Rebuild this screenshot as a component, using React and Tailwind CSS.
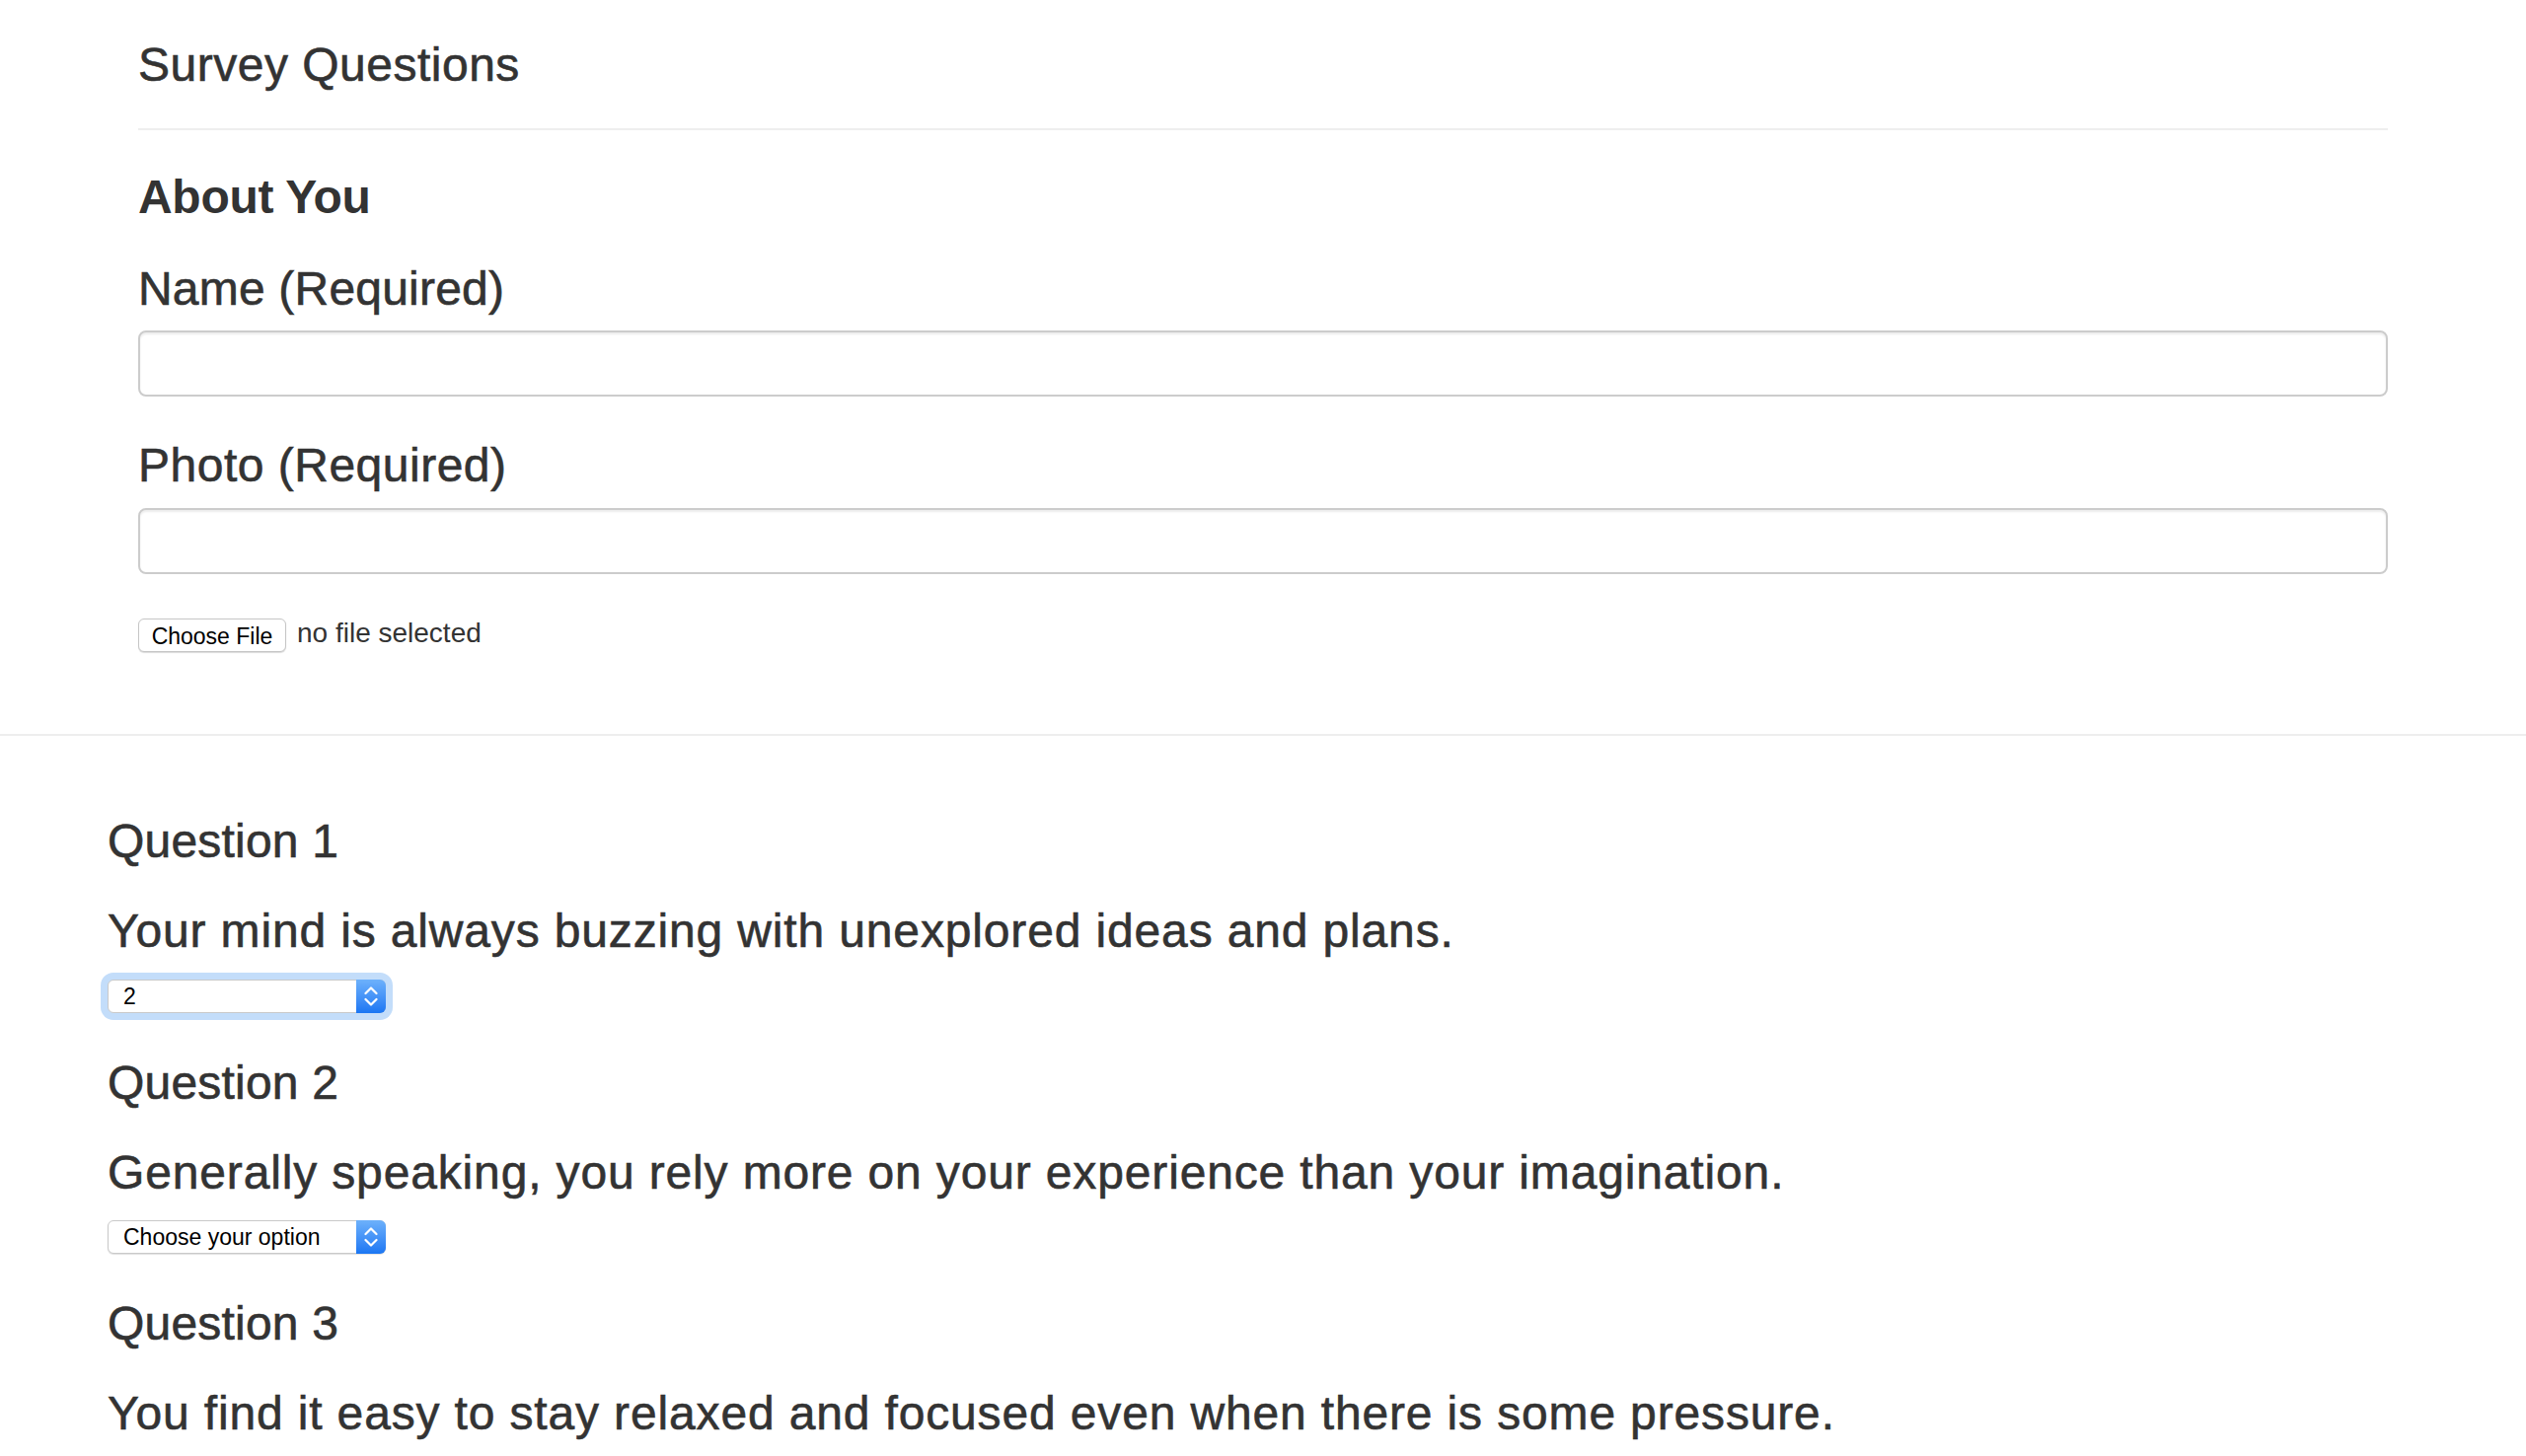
import { useState } from "react";

const questions = [
  {
    id: 1,
    text: "Your mind is always buzzing with unexplored ideas and plans.",
    value: "2",
    focused: true,
  },
  {
    id: 2,
    text: "Generally speaking, you rely more on your experience than your imagination.",
    value: "Choose your option",
  },
  {
    id: 3,
    text: "You find it easy to stay relaxed and focused even when there is some pressure.",
    value: "Choose your option",
  },
];

// headings in the shot are a medium weight, Liberation only has regular/bold
const medium = "text-[48px] font-medium leading-[52.8px] [-webkit-text-stroke:0.6px_#333]";

const Chevrons = () => (
  <svg width="14" height="24" viewBox="0 0 14 24" fill="none">
    <path d="M1.5 9 L7 3.5 L12.5 9" stroke="white" strokeWidth="2.2" strokeLinecap="round" strokeLinejoin="round" />
    <path d="M1.5 15 L7 20.5 L12.5 15" stroke="white" strokeWidth="2.2" strokeLinecap="round" strokeLinejoin="round" />
  </svg>
);

const FakeSelect = ({ value, focused }) => (
  <div
    className={`mt-[22px] flex h-[34px] w-[282px] items-stretch rounded-[6px] border border-[#c9c9c9] bg-white ${
      focused ? "shadow-[0_0_0_7px_#c3ddfa]" : "shadow-[0_1px_1px_rgba(0,0,0,0.12)]"
    }`}
  >
    <span className="flex flex-1 items-center pl-[15px] text-[23px] text-black">{value}</span>
    <span className="-my-px -mr-px flex w-[30px] items-center justify-center rounded-r-[6px] bg-gradient-to-b from-[#6db1fb] to-[#1a76f3]">
      <Chevrons />
    </span>
  </div>
);

const TextInput = ({ value, onChange }) => (
  <input
    type="text"
    value={value}
    onChange={(e) => onChange(e.target.value)}
    className="mt-[16px] block h-[67px] w-full rounded-[8px] border-2 border-[#cccccc] bg-white px-[24px] text-[28px] text-[#555] shadow-[inset_0_2px_2px_rgba(0,0,0,0.075)] outline-none"
  />
);

export default function App() {
  const [name, setName] = useState("");
  const [photo, setPhoto] = useState("");

  return (
    <div className="min-h-screen bg-white font-['Liberation_Sans',Arial,sans-serif] text-[#333]">
      {/* about you */}
      <div className="mx-[140px] pb-[82px] pt-[40px]">
        <h3 className={`${medium} tracking-[0.5px]`}>Survey Questions</h3>
        <div className="mt-[37px] h-[2px] bg-[#eeeeee]" />

        <h3 className="mt-[42px] text-[48px] font-bold leading-[52.8px] tracking-[-0.3px]">About You</h3>

        <h3 className={`mt-[40px] ${medium} tracking-[0.2px]`}>Name (Required)</h3>
        <TextInput value={name} onChange={setName} />

        <h3 className={`mt-[44px] ${medium} tracking-[0.5px]`}>Photo (Required)</h3>
        <TextInput value={photo} onChange={setPhoto} />

        <div className="mt-[45px] flex items-start gap-[11px]">
          <button
            type="button"
            className="h-[34px] w-[150px] rounded-[6px] border border-[#c6c6c6] bg-white text-[23px] text-black shadow-[0_1px_1px_rgba(0,0,0,0.15)]"
          >
            Choose File
          </button>
          <span className="-mt-[5px] text-[28px] leading-[40px]">no file selected</span>
        </div>
      </div>

      <div className="h-[2px] bg-[#eeeeee]" />

      {/* questions */}
      <div className="pl-[109px] pr-[140px] pt-[36px] pb-[60px]">
        {questions.map((q) => (
          <div key={q.id} className="mt-[45px]">
            <h3 className={`${medium} tracking-[0.2px]`}>Question {q.id}</h3>
            <h3 className={`mt-[38px] ${medium} tracking-[0.85px]`}>{q.text}</h3>
            <FakeSelect value={q.value} focused={q.focused} />
          </div>
        ))}
      </div>
    </div>
  );
}
